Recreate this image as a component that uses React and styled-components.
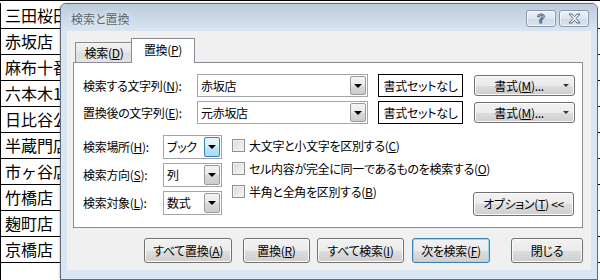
import React from "react";
import styled, { createGlobalStyle, css } from "styled-components";

const GlobalStyle = createGlobalStyle`
  html, body {
    margin: 0;
    padding: 0;
  }
  body {
    width: 600px;
    height: 280px;
    overflow: hidden;
    background: #fff;
    font-family: "Noto Sans CJK JP", "Noto Sans", sans-serif;
  }
`;

const Screen = styled.div`
  position: relative;
  width: 600px;
  height: 280px;
  overflow: hidden;
  background: #fff;
`;

/* spreadsheet behind the dialog */
const Sheet = styled.ul`
  list-style: none;
  margin: 0;
  padding: 2px 0 0;
  border-top: 1px solid #000;
  box-sizing: border-box;
  height: 280px;
`;
const Row = styled.li`
  display: flex;
  height: 25px;
  border-bottom: 1px solid #000;
`;
const Cell = styled.div`
  width: 56px;
  padding-left: 4px;
  border-left: 1px solid #000;
  font-size: 16px;
  line-height: 25px;
  white-space: nowrap;
  overflow: hidden;
  color: #000;
`;

/* dialog window */
const Window = styled.section`
  position: absolute;
  left: 60px;
  top: 3px;
  width: 538px;
  height: 277px;
  box-sizing: border-box;
  display: flex;
  flex-direction: column;
  border: 1px solid #5f6b7a;
  border-radius: 6px 6px 0 0;
  background: #dae5f2;
  box-shadow: -1px 0 2px rgba(0, 0, 0, 0.15);
  font-family: "Noto Sans CJK JP", "Noto Sans", sans-serif;
  font-size: 12px;
  font-feature-settings: "palt";
  color: #000;
`;
const TitleBar = styled.header`
  display: flex;
  align-items: flex-start;
  height: 27px;
  flex-shrink: 0;
  padding: 0 8px 0 10px;
  border-radius: 5px 5px 0 0;
  background: linear-gradient(#bccbdc, #ccd9e7 55%, #dae5f2);
`;
const TitleText = styled.h1`
  margin: 7px 0 0;
  font-size: 12px;
  font-weight: normal;
  line-height: 16px;
  color: #5e646c;
  text-shadow: 0 0 5px rgba(255, 255, 255, 0.9);
`;
const TitleButtons = styled.div`
  display: flex;
  gap: 3px;
  margin: 6px 0 0 auto;
`;
const TitleButton = styled.button`
  width: 30px;
  height: 17px;
  padding: 0;
  display: flex;
  align-items: center;
  justify-content: center;
  border: 1px solid #8b99ab;
  border-radius: 3px;
  background: linear-gradient(#edf2f8, #dde6f0 50%, #cfdbe8 51%, #d8e3ef);
  box-shadow: inset 0 0 0 1px rgba(255, 255, 255, 0.6);
  font-family: "Liberation Sans", sans-serif;
  font-size: 13px;
  font-weight: bold;
  line-height: 1;
  color: #f4f6f9;
  -webkit-text-stroke: 1px #5b6676;
`;

const Client = styled.div`
  flex: 1;
  margin: 0 6px 9px;
  padding: 7px 8px 0 6px;
  background: #f0f0f0;
  letter-spacing: -0.3px;
`;

const TabStrip = styled.div`
  position: relative;
  z-index: 1;
  display: flex;
  align-items: flex-end;
  height: 24px;
  padding-left: 2px;
`;
const Tab = styled.div`
  box-sizing: border-box;
  display: flex;
  align-items: center;
  justify-content: center;
  border: 1px solid #898c95;
  border-bottom: none;
  ${(p) =>
    p.$active
      ? css`
          width: 64px;
          height: 25px;
          margin: 0 0 -1px -2px;
          padding-bottom: 3px;
          background: #fff;
        `
      : css`
          width: 58px;
          height: 20px;
          background: linear-gradient(#f3f3f3, #e6e6e6 50%, #dcdcdc 51%, #e5e5e5);
        `}
`;

const Panel = styled.div`
  box-sizing: border-box;
  height: 166px;
  padding: 11px 8px 0 9px;
  border: 1px solid #898c95;
  background: #fff;
`;

const FieldRow = styled.div`
  display: flex;
  align-items: center;
  height: 23px;
  & + & {
    margin-top: 4px;
  }
`;
const Label = styled.label`
  width: ${(p) => p.$width}px;
  flex-shrink: 0;
  white-space: nowrap;
  line-height: 16px;
`;
const Key = styled.u`
  text-underline-offset: 1px;
`;

const Combo = styled.div`
  box-sizing: border-box;
  display: flex;
  align-items: center;
  width: ${(p) => p.$width}px;
  height: ${(p) => p.$height}px;
  flex-shrink: 0;
  padding: 1px 1px 1px 3px;
  border: 1px solid #a3a5aa;
  background: #fff;
  white-space: nowrap;
`;
const ComboText = styled.span`
  flex: 1;
  line-height: 16px;
`;
const DropButton = styled.span`
  box-sizing: border-box;
  display: flex;
  align-items: center;
  justify-content: center;
  width: 16px;
  align-self: stretch;
  border: 1px solid ${(p) => (p.$focus ? "#3c7fb1" : "#9b9b9b")};
  border-radius: 2px;
  background: ${(p) =>
    p.$focus
      ? "linear-gradient(#e9f6fd, #d7effc 50%, #bfe5fb 51%, #a9dbf6)"
      : "linear-gradient(#f4f4f4, #e9e9e9 50%, #d9d9d9 51%, #cdcdcd)"};
`;
const Caret = styled.span`
  width: 0;
  height: 0;
  border-left: ${(p) => p.$size}px solid transparent;
  border-right: ${(p) => p.$size}px solid transparent;
  border-top: ${(p) => p.$size}px solid #000;
`;

const FormatBox = styled.div`
  box-sizing: border-box;
  width: 85px;
  height: 23px;
  margin: 0 11px 0 10px;
  display: flex;
  align-items: center;
  justify-content: center;
  flex-shrink: 0;
  border: 1px solid #000;
  background: #fff;
  white-space: nowrap;
`;

const Button = styled.button`
  box-sizing: border-box;
  width: ${(p) => p.$width}px;
  height: ${(p) => p.$height || 25}px;
  margin-left: ${(p) => p.$gap || 0}px;
  padding: 0;
  display: flex;
  align-items: center;
  justify-content: center;
  flex-shrink: 0;
  border: 1px solid ${(p) => (p.$default ? "#3c7fb1" : "#707070")};
  border-radius: 3px;
  background: linear-gradient(#f2f2f2, #ebebeb 50%, #dddddd 51%, #cfcfcf);
  box-shadow: inset 0 0 0 1px ${(p) => (p.$default ? "#9fd6f5" : "#fbfbfb")};
  font: inherit;
  letter-spacing: inherit;
  color: #000;
  white-space: nowrap;
`;
const ButtonText = styled.span`
  flex: 1;
  text-align: center;
  line-height: 16px;
`;
const ButtonArrow = styled.span`
  margin-right: 5px;
  width: 0;
  height: 0;
  border-left: 3px solid transparent;
  border-right: 3px solid transparent;
  border-top: 3px solid #333;
`;

const Options = styled.div`
  display: flex;
  margin-top: 11px;
`;
const Selects = styled.div`
  display: grid;
  grid-template-columns: 80px 59px;
  grid-auto-rows: 24px;
  row-gap: 4px;
  align-items: center;
  flex-shrink: 0;
`;
const Checks = styled.ul`
  flex: 1;
  min-width: 0;
  list-style: none;
  margin: -1px 0 0 10px;
  padding: 0;
`;
const Check = styled.li`
  display: flex;
  align-items: center;
  gap: 4px;
  height: 23px;
  white-space: nowrap;
  line-height: 16px;
`;
const Box = styled.span`
  box-sizing: border-box;
  flex-shrink: 0;
  width: 13px;
  height: 13px;
  border: 1px solid #8e8f8f;
  background: linear-gradient(135deg, #d9d9d9, #f7f7f7);
  box-shadow: inset 0 0 0 1px #f2f2f2;
`;
const OptionButtonWrap = styled.div`
  flex-shrink: 0;
  align-self: flex-end;
  margin-bottom: -1px;
`;

const Actions = styled.div`
  display: flex;
  justify-content: flex-end;
  margin-top: 10px;
`;

const cells = [
  "三田桜田門店",
  "赤坂店",
  "麻布十番店",
  "六本木1丁目店",
  "日比谷公園店",
  "半蔵門店",
  "市ヶ谷店",
  "竹橋店",
  "麹町店",
  "京橋店",
  "",
];

const Access = ({ text, k, tail = "" }) => (
  <>
    {text}(<Key>{k}</Key>){tail}
  </>
);

export default function App() {
  return (
    <Screen>
      <GlobalStyle />
      <Sheet>
        {cells.map((c, i) => (
          <Row key={i}>
            <Cell>{c}</Cell>
          </Row>
        ))}
      </Sheet>

      <Window>
        <TitleBar>
          <TitleText>検索と置換</TitleText>
          <TitleButtons>
            <TitleButton type="button">?</TitleButton>
            <TitleButton type="button">
              <svg width="13" height="11" viewBox="0 0 13 11">
                <path
                  d="M1 1h3l2.5 2.8L9 1h3L8 5.5 12 10H9L6.5 7.2 4 10H1l4-4.5z"
                  fill="#f4f6f9"
                  stroke="#5b6676"
                  strokeWidth="1"
                  strokeLinejoin="round"
                />
              </svg>
            </TitleButton>
          </TitleButtons>
        </TitleBar>

        <Client>
          <TabStrip>
            <Tab>
              <Access text="検索" k="D" />
            </Tab>
            <Tab $active>
              <Access text="置換" k="P" />
            </Tab>
          </TabStrip>

          <Panel>
            <FieldRow>
              <Label $width={114}>
                <Access text="検索する文字列" k="N" tail=":" />
              </Label>
              <Combo $width={171} $height={23}>
                <ComboText>赤坂店</ComboText>
                <DropButton>
                  <Caret $size={4} />
                </DropButton>
              </Combo>
              <FormatBox>書式セットなし</FormatBox>
              <Button type="button" $width={101} $height={21}>
                <ButtonText>
                  <Access text="書式" k="M" tail="..." />
                </ButtonText>
                <ButtonArrow />
              </Button>
            </FieldRow>
            <FieldRow>
              <Label $width={114}>
                <Access text="置換後の文字列" k="E" tail=":" />
              </Label>
              <Combo $width={171} $height={23}>
                <ComboText>元赤坂店</ComboText>
                <DropButton>
                  <Caret $size={4} />
                </DropButton>
              </Combo>
              <FormatBox>書式セットなし</FormatBox>
              <Button type="button" $width={101} $height={21}>
                <ButtonText>
                  <Access text="書式" k="M" tail="..." />
                </ButtonText>
                <ButtonArrow />
              </Button>
            </FieldRow>

            <Options>
              <Selects>
                <Label $width={80}>
                  <Access text="検索場所" k="H" tail=":" />
                </Label>
                <Combo $width={59} $height={24}>
                  <ComboText>ブック</ComboText>
                  <DropButton $focus>
                    <Caret $size={4} />
                  </DropButton>
                </Combo>
                <Label $width={80}>
                  <Access text="検索方向" k="S" tail=":" />
                </Label>
                <Combo $width={59} $height={24}>
                  <ComboText>列</ComboText>
                  <DropButton>
                    <Caret $size={4} />
                  </DropButton>
                </Combo>
                <Label $width={80}>
                  <Access text="検索対象" k="L" tail=":" />
                </Label>
                <Combo $width={59} $height={24}>
                  <ComboText>数式</ComboText>
                  <DropButton>
                    <Caret $size={4} />
                  </DropButton>
                </Combo>
              </Selects>

              <Checks>
                <Check>
                  <Box />
                  <span>
                    <Access text="大文字と小文字を区別する" k="C" />
                  </span>
                </Check>
                <Check>
                  <Box />
                  <span>
                    <Access text="セル内容が完全に同一であるものを検索する" k="O" />
                  </span>
                </Check>
                <Check>
                  <Box />
                  <span>
                    <Access text="半角と全角を区別する" k="B" />
                  </span>
                </Check>
              </Checks>

              <OptionButtonWrap>
                <Button type="button" $width={101} $height={24}>
                  <ButtonText>
                    <Access text="オプション" k="T" tail=" <<" />
                  </ButtonText>
                </Button>
              </OptionButtonWrap>
            </Options>
          </Panel>

          <Actions>
            <Button type="button" $width={88}>
              <ButtonText>
                <Access text="すべて置換" k="A" />
              </ButtonText>
            </Button>
            <Button type="button" $width={67} $gap={11}>
              <ButtonText>
                <Access text="置換" k="R" />
              </ButtonText>
            </Button>
            <Button type="button" $width={87} $gap={7}>
              <ButtonText>
                <Access text="すべて検索" k="I" />
              </ButtonText>
            </Button>
            <Button type="button" $width={78} $gap={8} $default>
              <ButtonText>
                <Access text="次を検索" k="F" />
              </ButtonText>
            </Button>
            <Button type="button" $width={72} $gap={21}>
              <ButtonText>閉じる</ButtonText>
            </Button>
          </Actions>
        </Client>
      </Window>
    </Screen>
  );
}
